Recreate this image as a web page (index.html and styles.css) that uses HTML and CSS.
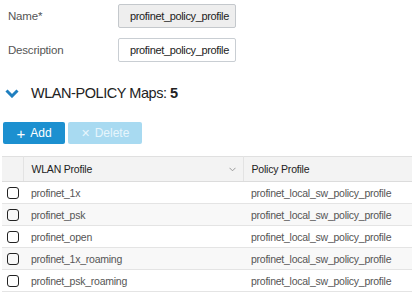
FILE: index.html
```html
<!DOCTYPE html>
<html>
<head>
<meta charset="utf-8">
<link rel="stylesheet" href="styles.css">
</head>
<body>
<div class="page">
  <div class="form">
    <div class="form-row">
      <label class="label">Name*</label>
      <div class="input readonly">profinet_policy_profile</div>
    </div>
    <div class="form-row">
      <label class="label">Description</label>
      <div class="input">profinet_policy_profile</div>
    </div>
  </div>
  <div class="section-title">
    <svg class="chevron" width="14" height="9" viewBox="0 0 14 9"><path d="M1.5 1.5 L7 7 L12.5 1.5" fill="none" stroke="#1f7fbf" stroke-width="3"/></svg>
    <span>WLAN-POLICY Maps: <b>5</b></span>
  </div>
  <div class="toolbar">
    <button class="btn btn-add"><span class="ico">+</span> Add</button>
    <button class="btn btn-del"><span class="ico">✕</span> Delete</button>
  </div>
  <table class="grid">
    <thead>
      <tr>
        <th class="cb-col"></th>
        <th class="col-wlan"><span>WLAN Profile</span><svg class="sort" width="7" height="5" viewBox="0 0 7 5"><path d="M0.5 0.8 L3.5 3.8 L6.5 0.8" fill="none" stroke="#999" stroke-width="1"/></svg></th>
        <th class="col-policy">Policy Profile</th>
      </tr>
    </thead>
    <tbody>
      <tr><td class="cb-col"><span class="cb"></span></td><td>profinet_1x</td><td>profinet_local_sw_policy_profile</td></tr>
      <tr><td class="cb-col"><span class="cb"></span></td><td>profinet_psk</td><td>profinet_local_sw_policy_profile</td></tr>
      <tr><td class="cb-col"><span class="cb"></span></td><td>profinet_open</td><td>profinet_local_sw_policy_profile</td></tr>
      <tr><td class="cb-col"><span class="cb"></span></td><td>profinet_1x_roaming</td><td>profinet_local_sw_policy_profile</td></tr>
      <tr><td class="cb-col"><span class="cb"></span></td><td>profinet_psk_roaming</td><td>profinet_local_sw_policy_profile</td></tr>
    </tbody>
  </table>
</div>
</body>
</html>
```

FILE: styles.css
```css
html, body {
  margin: 0;
  padding: 0;
  background: #fff;
}
body {
  font-family: "Liberation Sans", Arial, sans-serif;
  font-size: 12px;
  color: #444;
  width: 412px;
  height: 292px;
  overflow: hidden;
}
.page {
  padding-top: 4px;
}
.form {
  display: flex;
  flex-direction: column;
  gap: 10px;
}
.form-row {
  display: flex;
  align-items: center;
  height: 24px;
}
.label {
  width: 110px;
  padding-left: 8px;
  color: #555;
  font-size: 11.5px;
  letter-spacing: -0.2px;
}
.input {
  box-sizing: border-box;
  width: 118px;
  height: 24px;
  border: 1px solid #c9ced3;
  border-radius: 2px;
  padding: 0 0 0 11px;
  line-height: 22px;
  font-size: 11px;
  letter-spacing: -0.35px;
  color: #222;
  background: #fff;
  white-space: nowrap;
  overflow: hidden;
}
.input.readonly {
  background: #eeeeee;
  border-color: #c4c8cc;
}
.section-title {
  display: flex;
  align-items: center;
  margin-top: 22px;
  height: 18px;
  font-size: 14.5px;
  letter-spacing: -0.45px;
  color: #222;
}
.chevron {
  margin-left: 5px;
  margin-right: 12px;
}
.section-title b {
  font-weight: bold;
}
.toolbar {
  display: flex;
  gap: 3px;
  margin-top: 20px;
  padding-left: 3px;
}
.btn {
  box-sizing: border-box;
  height: 22px;
  border: none;
  border-radius: 2px;
  font-family: "Liberation Sans", Arial, sans-serif;
  font-size: 12px;
  color: #fff;
  display: flex;
  align-items: center;
  justify-content: center;
  padding: 0;
}
.btn .ico {
  margin-right: 5px;
  font-size: 15px;
  font-weight: normal;
}
.btn-del .ico {
  font-size: 11px;
}
.btn-add {
  width: 62px;
  background: #1c90d0;
}
.btn-del {
  width: 74px;
  background: #a8daf1;
  color: #e6f5fc;
}
.grid {
  margin-top: 12px;
  margin-left: 2px;
  border-collapse: collapse;
  width: 430px;
  table-layout: fixed;
}
.grid th, .grid td {
  box-sizing: border-box;
  height: 22px;
  padding: 0 0 0 8px;
  text-align: left;
  white-space: nowrap;
  font-size: 10.5px;
  letter-spacing: -0.25px;
  border-bottom: 1px solid #e4e4e4;
}
.grid thead th {
  height: 25px;
  background: #f3f3f3;
  font-weight: normal;
  color: #222;
  letter-spacing: -0.2px;
  border-top: 1px solid #e0e0e0;
  border-bottom: 1px solid #dcdcdc;
}
.grid th.cb-col, .grid td.cb-col {
  width: 21px;
  padding: 0 0 0 5px;
}
.grid th.cb-col {
  border-right: 1px solid #e3e3e3;
}
.col-wlan {
  width: 220px;
  border-right: 1px solid #e3e3e3;
  position: relative;
}
.col-wlan .sort {
  position: absolute;
  right: 7px;
  top: 10px;
}
.grid td {
  color: #555;
}
.grid tbody tr:nth-child(even) td {
  background: #f8f8f8;
}
.cb {
  display: inline-block;
  box-sizing: border-box;
  width: 12px;
  height: 12px;
  border: 1.5px solid #222;
  border-radius: 3px;
  vertical-align: middle;
}
```
